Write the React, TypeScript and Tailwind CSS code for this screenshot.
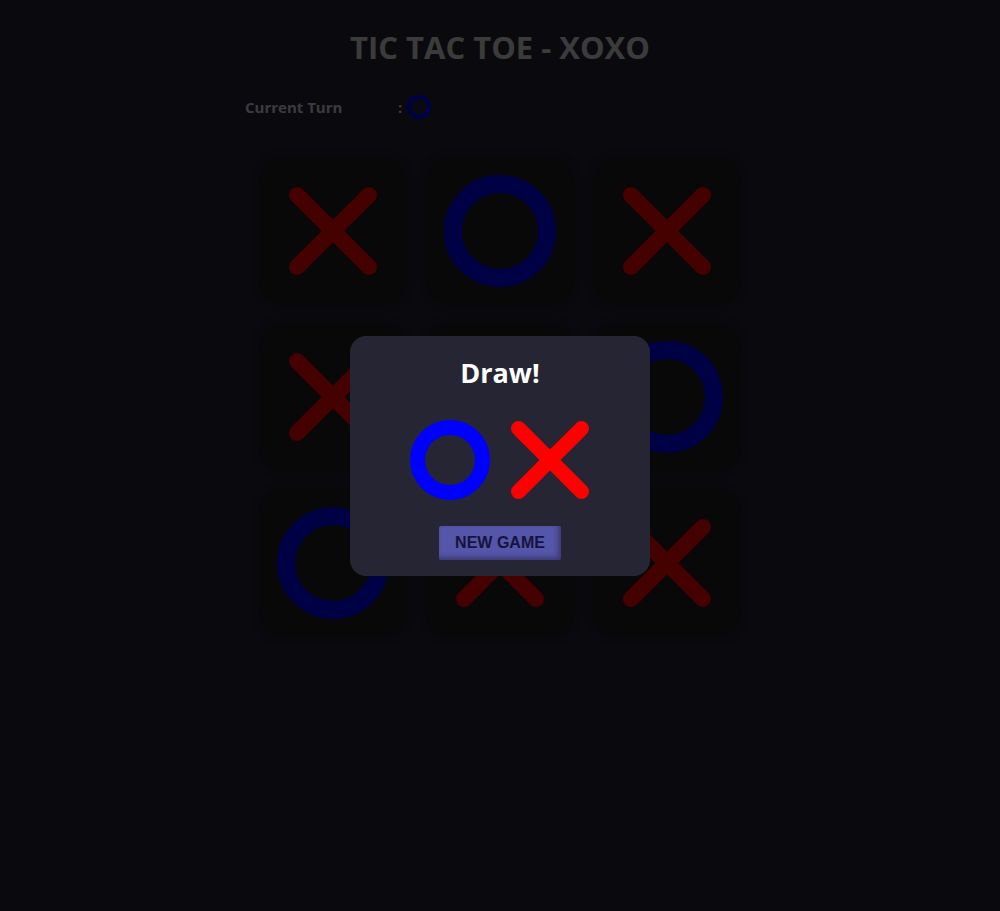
import React from "react";

const XMark = ({ size, reach, stroke, color }: { size: number; reach: number; stroke: number; color: string }) => {
  const c = size / 2;
  return (
    <svg width={size} height={size} viewBox={`0 0 ${size} ${size}`}>
      <line x1={c - reach} y1={c - reach} x2={c + reach} y2={c + reach} stroke={color} strokeWidth={stroke} strokeLinecap="round" />
      <line x1={c + reach} y1={c - reach} x2={c - reach} y2={c + reach} stroke={color} strokeWidth={stroke} strokeLinecap="round" />
    </svg>
  );
};

const OMark = ({ size, r, stroke, color }: { size: number; r: number; stroke: number; color: string }) => {
  const c = size / 2;
  return (
    <svg width={size} height={size} viewBox={`0 0 ${size} ${size}`}>
      <circle cx={c} cy={c} r={r} fill="none" stroke={color} strokeWidth={stroke} />
    </svg>
  );
};

const board = ["X", "O", "X", "X", "X", "O", "O", "X", "X"];

export default function App() {
  return (
    <div className="relative min-h-[911px] w-full bg-[#252534]" style={{ fontFamily: '"Open Sans", "Noto Sans", sans-serif' }}>
      <div className="flex flex-col items-center pt-[26px]">
        <h1 className="text-[31px] font-bold leading-[42px] text-[#d8d8d8]">TIC TAC TOE - XOXO</h1>
        <div className="mt-[26px] flex w-[510px] items-center text-[15px] font-bold text-[#d8d8e0]">
          <span className="w-[153px]">Current Turn</span>
          <span className="mr-[4px]">:</span>
          <OMark size={26} r={10} stroke={4.5} color="#0000ff" />
        </div>
        <div className="mt-[38px] grid grid-cols-[repeat(3,146px)] grid-rows-[repeat(3,146px)] gap-x-[21px] gap-y-[20px]">
          {board.map((v, i) => (
            <div key={i} className="flex items-center justify-center rounded-[22px] bg-[#1e1e20] shadow-[0_0_8px_rgba(0,0,0,0.35)]">
              {v === "X" ? (
                <XMark size={146} reach={36} stroke={16} color="#ff0000" />
              ) : (
                <OMark size={146} r={47} stroke={18} color="#0000ff" />
              )}
            </div>
          ))}
        </div>
      </div>

      <div className="fixed inset-0 flex items-center justify-center bg-black/[0.73]">
        <div className="flex h-[240px] w-[300px] flex-col items-center rounded-[16px] bg-[#252533] pt-[18px]">
          <div className="text-[27px] font-bold leading-[38px] text-white">Draw!</div>
          <div className="mt-[28px] flex items-center gap-[20px]">
            <OMark size={80} r={32.5} stroke={15} color="#0000ff" />
            <XMark size={80} reach={31.5} stroke={15} color="#ff0000" />
          </div>
          <button
            className="mt-[26px] h-[34px] w-[122px] rounded-[2px] bg-[#5555a9] text-[16px] font-bold text-[#14143c] shadow-[inset_-3px_-3px_5px_rgba(0,0,0,0.3)]"
            style={{ fontFamily: '"Liberation Sans", Arial, sans-serif' }}
          >
            NEW GAME
          </button>
        </div>
      </div>
    </div>
  );
}
